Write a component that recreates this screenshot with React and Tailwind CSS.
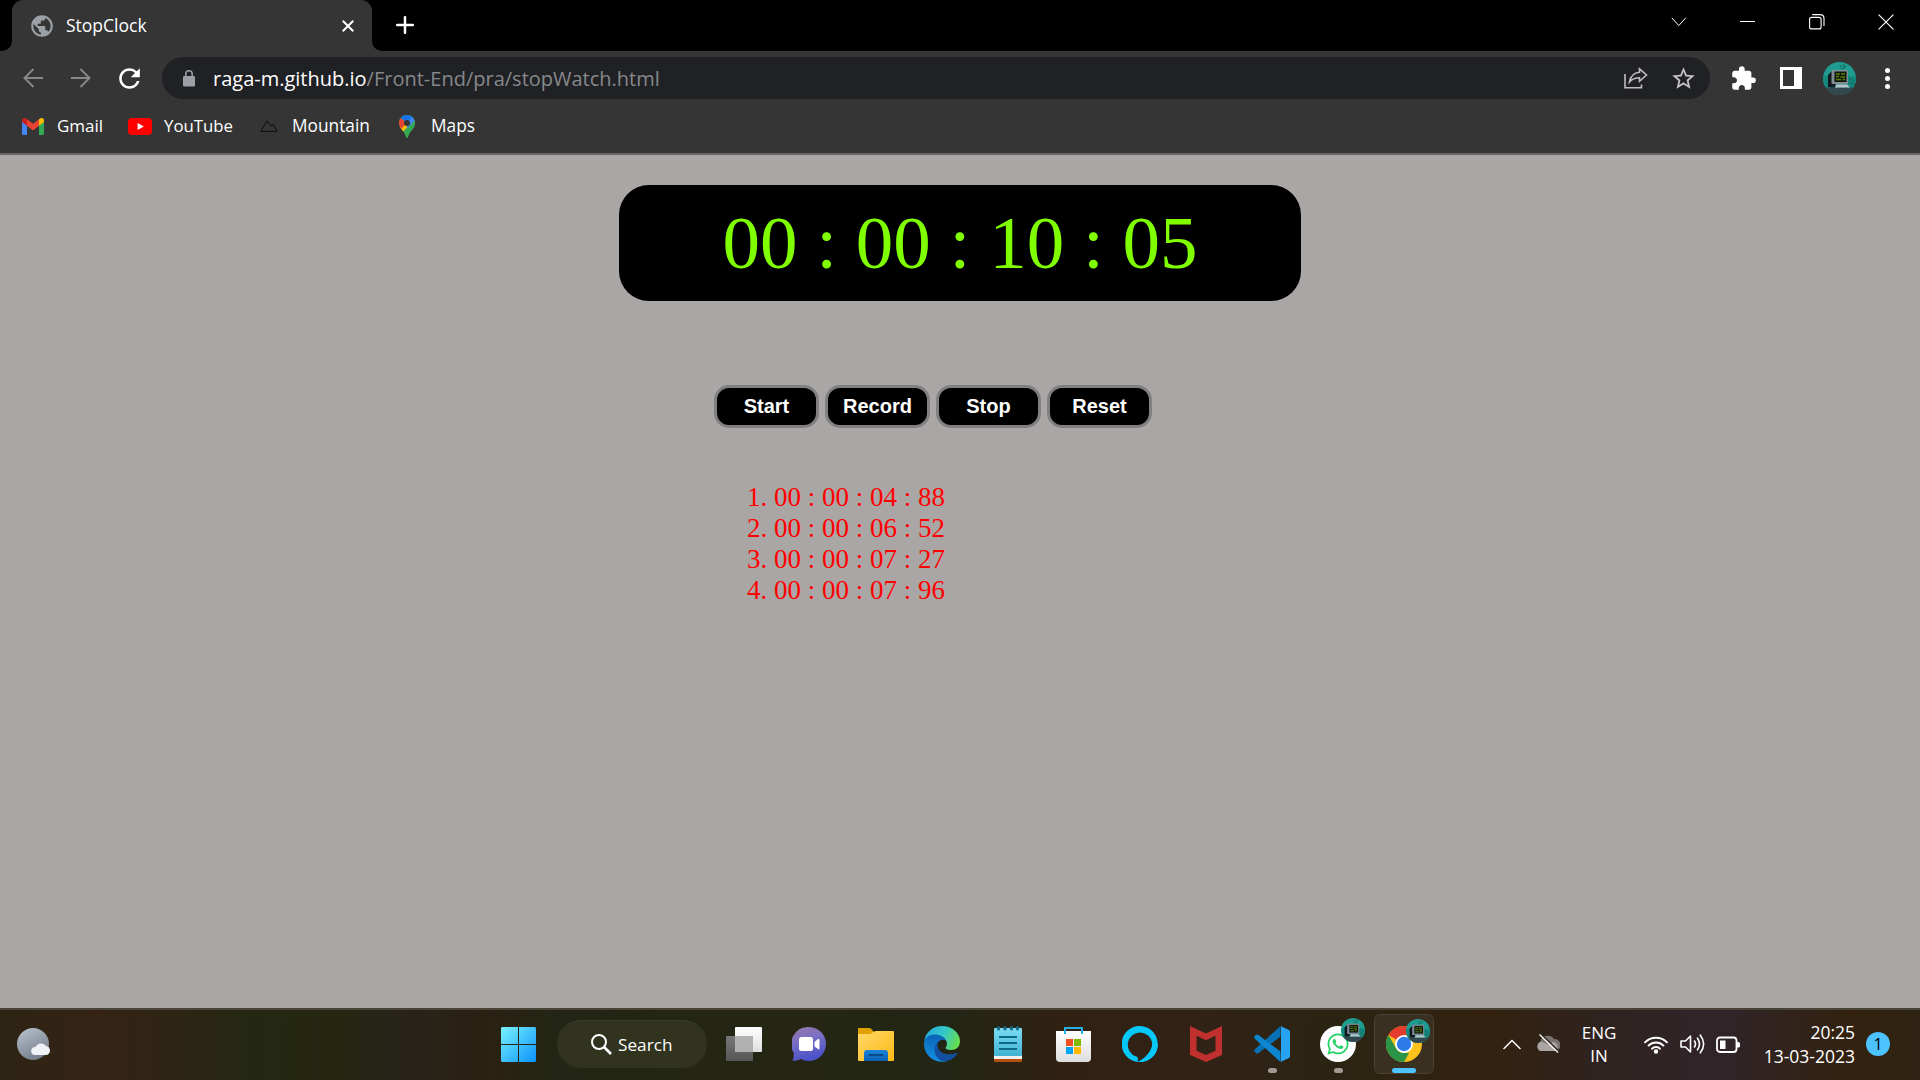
import React from "react";
import { MdExtension, MdPublic, MdRefresh, MdStarBorder } from "react-icons/md";
import { FaWhatsapp } from "react-icons/fa";

function GmailIcon() {
  return (
    <svg width="22" height="17" viewBox="0 0 22 17">
      <path d="M0 2.5V15.5Q0 17 1.5 17H5V7.5L0 3Z" fill="#4285f4" />
      <path d="M22 2.5V15.5Q22 17 20.5 17H17V7.5L22 3Z" fill="#34a853" />
      <path d="M5 1.2V7.8L11 12.4L17 7.8V1.2L11 5.8Z" fill="#ea4335" />
      <path d="M0 2.8Q0 0 2.4 0Q3.4 0 5 1.2V7.8L0 4Z" fill="#c5221f" />
      <path d="M22 2.8Q22 0 19.6 0Q18.6 0 17 1.2V7.8L22 4Z" fill="#fbbc04" />
    </svg>
  );
}

function YouTubeIcon() {
  return (
    <svg width="24" height="17" viewBox="0 0 24 17">
      <rect width="24" height="17" rx="4" fill="#f00" />
      <path d="M9.6 4.9L15.8 8.4L9.6 12Z" fill="#fff" />
    </svg>
  );
}

function MountainIcon() {
  return (
    <svg width="18" height="12" viewBox="0 0 18 12" fill="none" stroke="#0c0c0c" strokeWidth="1">
      <path d="M0.6 11.4L7.2 0.8L10.8 6.4L12.9 4.2L17.4 11.4Z" />
    </svg>
  );
}

function MapsIcon() {
  return (
    <svg width="16" height="23" viewBox="0 0 16 23">
      <defs>
        <clipPath id="pin">
          <path d="M8 0C3.5 0 0 3.5 0 7.9C0 13.5 5.5 15.5 7 21.8Q8 24.2 9 21.8C10.5 15.5 16 13.5 16 7.9C16 3.5 12.500 0 8 0Z" />
        </clipPath>
      </defs>
      <g clipPath="url(#pin)">
        <rect width="16" height="23" fill="#34a853" />
        <path d="M-1 14L8 4L12 8L2 19Z" fill="#fbbc04" />
        <path d="M-1 1L8 8L-1 17Z" fill="#ea4335" />
        <path d="M1.800 2.800L8 8L13.500 1.800L11 -1H3Z" fill="#1a73e8" />
        <path d="M8 8L13.500 1.500L17 8L8 17Z" fill="#4285f4" />
        <path d="M17 4L4 18L8 24L17 18Z" fill="#34a853" />
      </g>
      <circle cx="8" cy="8" r="3" fill="#353535" />
    </svg>
  );
}

function LockIcon() {
  return (
    <svg width="12" height="17" viewBox="0 0 12 17">
      <rect x="0" y="6" width="12" height="10.500" rx="1.300" fill="#9aa0a6" />
      <path d="M2.800 7V4A3.200 3.200 0 0 1 9.200 4V7" fill="none" stroke="#9aa0a6" strokeWidth="1.500" />
    </svg>
  );
}

function Avatar({ size }) {
  return (
    <svg width={size} height={size} viewBox="0 0 33 33">
      <defs>
        <clipPath id="face">
          <circle cx="16.500" cy="16.500" r="16.500" />
        </clipPath>
      </defs>
      <g clipPath="url(#face)">
        <rect width="33" height="33" fill="#1f9c90" />
        <rect y="14" width="33" height="12" fill="#148a7e" />
        <rect y="25.500" width="33" height="8" fill="#33474f" />
        <path d="M17 3L19 7M20 2L22 6M23 3L20 7M26 16L31 19M26 20L32 23" stroke="#12655f" strokeWidth="1" />
        <path d="M5 13L9 9H12V25H5Z" fill="#11181d" />
        <rect x="8.500" y="8" width="16.500" height="14" rx="1" fill="#7f8b97" />
        <rect x="11.500" y="9.500" width="12" height="10.500" fill="#10170b" />
        <path d="M13 12H17M18 12H22M13 14.500H16M17.500 15H22M13 17.500H18M19.500 17.500H22" stroke="#557f10" strokeWidth="1.500" />
        <path d="M13 22.500H24L27 25.500H12Z" fill="#b9c3cc" />
        <path d="M7 22.500H13L11.500 25.500H7Z" fill="#161c22" />
      </g>
    </svg>
  );
}

function TitleBar() {
  return (
    <div className="flex h-[51px] items-end bg-black">
      <div className="h-[10px] w-[12px] bg-[#353535]">
        <div className="h-full w-full rounded-br-[10px] bg-black" />
      </div>
      <div className="flex h-[51px] w-[360px] items-center rounded-t-[11px] bg-[#353535] pl-[17px] pr-[18px]">
        <MdPublic size={26} color="#9aa0a6" />
        <span className="ml-[11px] pb-[2px] text-[17.5px] leading-6">StopClock</span>
        <svg className="ml-auto" width="12" height="12" viewBox="0 0 12 12" stroke="#fff" strokeWidth="2">
          <path d="M0.700 0.700L11.300 11.300M11.300 0.700L0.700 11.300" />
        </svg>
      </div>
      <div className="h-[10px] w-[12px] bg-[#353535]">
        <div className="h-full w-full rounded-bl-[10px] bg-black" />
      </div>
      <svg className="mb-[17px] ml-[12px]" width="18" height="18" viewBox="0 0 18 18" stroke="#fff" strokeWidth="2.500" strokeLinecap="round">
        <path d="M9 1.200V16.800M1.200 9H16.800" />
      </svg>
      <div className="ml-auto flex h-[43px] items-center self-start pr-[26px]">
        <svg width="16" height="10" viewBox="0 0 16 10" fill="none" stroke="#fff" strokeWidth="1">
          <path d="M0.800 0.800L7.800 8.600L14.800 0.800" />
        </svg>
        <div className="ml-[53px] h-px w-[15px] bg-white" />
        <svg className="ml-[54px]" width="16" height="16" viewBox="0 0 16 16" fill="none" stroke="#fff" strokeWidth="1.100">
          <rect x="0.600" y="3.400" width="11.500" height="11.500" rx="2" />
          <path d="M3.200 0.600H11Q15 0.600 15 4.500V12" />
        </svg>
        <svg className="ml-[53px]" width="16" height="16" viewBox="0 0 16 16" stroke="#fff" strokeWidth="1.200">
          <path d="M0.600 0.600L15.400 15.400M15.400 0.600L0.600 15.400" />
        </svg>
      </div>
    </div>
  );
}

function Toolbar() {
  return (
    <div className="flex h-[54px] items-center pr-[26px]">
      <div className="flex w-[162px] items-center pl-[23px]">
        <svg width="20" height="20" viewBox="0 0 20 20" fill="none" stroke="#87898b" strokeWidth="1.900">
          <path d="M20 10H1.500M10.500 1L1.500 10L10.500 19" />
        </svg>
        <svg className="ml-[28px]" width="20" height="20" viewBox="0 0 20 20" fill="none" stroke="#87898b" strokeWidth="1.900">
          <path d="M0 10H18.500M9.500 1L18.500 10L9.500 19" />
        </svg>
        <MdRefresh className="ml-[23px]" size={31} color="#fff" />
      </div>
      <div className="flex h-[42px] w-[1548px] items-center rounded-full bg-[#202124] pl-[21px] pr-[13px]">
        <LockIcon />
        <span className="ml-[18px] pt-px text-[20px] leading-7">raga-m.github.io</span>
        <span className="pt-px text-[20px] leading-7 text-[#86888b]">/Front-End/pra/stopWatch.html</span>
        <svg className="ml-auto" width="24" height="22" viewBox="0 0 24 22" fill="none" stroke="#bfbfbf" strokeWidth="1.600">
          <path d="M1 7V20.800H17.500V17.500" />
          <path d="M15.500 1.800L22.500 8L15.500 14.300V10.700C11 10.700 8 12 5.500 15C6.500 9.500 9.500 5.800 15.500 5.300Z" />
        </svg>
        <MdStarBorder className="ml-[22px]" size={27} color="#c4c4c4" />
      </div>
      <MdExtension className="ml-[20px]" size={27} color="#fff" />
      <div className="ml-[23px] flex h-[22px] w-[22px] border-[3px] border-white">
        <div className="ml-auto h-full w-[5px] bg-white" />
      </div>
      <div className="ml-[21px]">
        <Avatar size={33} />
      </div>
      <div className="ml-auto flex flex-col gap-[3px] pr-[4px]">
        <div className="h-[5px] w-[5px] rounded-full bg-white" />
        <div className="h-[5px] w-[5px] rounded-full bg-white" />
        <div className="h-[5px] w-[5px] rounded-full bg-white" />
      </div>
    </div>
  );
}

function Bookmarks() {
  return (
    <div className="flex h-[50px] items-center border-b-2 border-[#656565] pb-[6px] pl-[22px] text-[17.3px] leading-6">
      <GmailIcon />
      <span className="ml-[13px] w-[71px] text-[17px]">Gmail</span>
      <YouTubeIcon />
      <span className="ml-[12px] w-[96px] text-[16.800px]">YouTube</span>
      <MountainIcon />
      <span className="ml-[14px] w-[107px]">Mountain</span>
      <MapsIcon />
      <span className="ml-[16px]">Maps</span>
    </div>
  );
}

const BUTTONS = ["Start", "Record", "Stop", "Reset"];
const RECORDS = ["00 : 00 : 04 : 88", "00 : 00 : 06 : 52", "00 : 00 : 07 : 27", "00 : 00 : 07 : 96"];

function StopClock() {
  return (
    <main className="flex-1 bg-[#aaa6a5] pt-[30px] font-['Liberation_Serif',serif]">
      <div className="mx-auto flex h-[116px] w-[682px] items-center justify-center rounded-[30px] bg-black text-[75px] leading-[86px] text-[#7fff00]">
        00 : 00 : 10 : 05
      </div>
      <div className="ml-[714px] mt-[84px] flex gap-[6px]">
        {BUTTONS.map((label) => (
          <button
            key={label}
            className="h-[43px] w-[105px] rounded-[15px] border-[3px] border-[#808080] bg-black pb-px text-center font-['Liberation_Sans',sans-serif] text-[20px] font-bold leading-[23px] text-white"
          >
            {label}
          </button>
        ))}
      </div>
      <ol className="ml-[747px] mt-[54px] text-[27px] leading-[31px] text-[#ff0000]">
        {RECORDS.map((time, i) => (
          <li key={time}>
            {i + 1}. {time}
          </li>
        ))}
      </ol>
    </main>
  );
}

function StartIcon() {
  return (
    <svg className="ml-px mt-px" width="35" height="35" viewBox="0 0 35 35">
      <defs>
        <linearGradient id="win" x1="0" y1="0" x2="35" y2="35" gradientUnits="userSpaceOnUse">
          <stop offset="0" stopColor="#79f2ff" />
          <stop offset="1" stopColor="#0a93fb" />
        </linearGradient>
      </defs>
      <path d="M1 0H17V17H0V1ZM18 0H34L35 1V17H18ZM0 18H17V35H1L0 34ZM18 18H35V34L34 35H18Z" fill="url(#win)" />
    </svg>
  );
}

function TaskViewIcon() {
  return (
    <svg width="36" height="34" viewBox="0 0 36 34">
      <defs>
        <linearGradient id="tvw" x1="0" y1="0" x2="0" y2="1">
          <stop offset="0" stopColor="#ffffff" />
          <stop offset="1" stopColor="#dedede" />
        </linearGradient>
        <linearGradient id="tvd" x1="0" y1="0" x2="0" y2="1">
          <stop offset="0" stopColor="#777" />
          <stop offset="1" stopColor="#555" />
        </linearGradient>
      </defs>
      <rect x="0" y="9" width="27" height="25" rx="1" fill="url(#tvd)" />
      <rect x="9" y="0" width="27" height="25" rx="1" fill="url(#tvw)" />
      <path d="M9 9H27V25H9Z" fill="#b1b1b1" />
    </svg>
  );
}

function ChatIcon() {
  return (
    <svg className="mr-[2px]" width="34" height="34" viewBox="0 0 34 34">
      <defs>
        <linearGradient id="chat" x1="0" y1="0" x2="0.300" y2="1">
          <stop offset="0" stopColor="#9a77a8" />
          <stop offset="0.450" stopColor="#7a70c4" />
          <stop offset="1" stopColor="#4b52c8" />
        </linearGradient>
      </defs>
      <path d="M17 0A17 17 0 1 1 9 32Q5 34 0.500 34Q1.800 31 1.800 26A17 17 0 0 1 17 0Z" fill="url(#chat)" />
      <rect x="7" y="10" width="14" height="14" rx="2.500" fill="#fff" />
      <path d="M22.500 15L26 12Q27.500 11.500 27.500 13V21.500Q27.500 23 26 22L22.500 19.500Z" fill="#fff" />
    </svg>
  );
}

function FolderIcon() {
  return (
    <svg width="36" height="33" viewBox="0 0 36 33">
      <defs>
        <linearGradient id="fold" x1="0" y1="0" x2="1" y2="1">
          <stop offset="0" stopColor="#ffd968" />
          <stop offset="1" stopColor="#fdb916" />
        </linearGradient>
        <linearGradient id="tray" x1="0" y1="0" x2="0" y2="1">
          <stop offset="0" stopColor="#1b86dc" />
          <stop offset="1" stopColor="#0a5fb2" />
        </linearGradient>
      </defs>
      <path d="M0 1Q0 0 1 0H11Q12.500 0 13.500 1.200L16 4V10H0Z" fill="#e0a000" />
      <path d="M0 6H11Q13 6 14.500 4.500Q16 3 18 3H35Q36 3 36 4V32Q36 33 35 33H1Q0 33 0 32Z" fill="url(#fold)" />
      <path d="M6 33V25Q6 22 9 22H27Q30 22 30 25V33Z" fill="url(#tray)" />
      <rect x="10.500" y="26" width="15" height="2" rx="1" fill="#0a4a86" />
    </svg>
  );
}

function EdgeIcon() {
  return (
    <svg width="36" height="36" viewBox="0 0 36 36">
      <defs>
        <linearGradient id="eg1" x1="0" y1="0.200" x2="1" y2="0.500">
          <stop offset="0" stopColor="#25a8de" />
          <stop offset="0.550" stopColor="#35c9c6" />
          <stop offset="1" stopColor="#66de50" />
        </linearGradient>
        <linearGradient id="eg2" x1="0.600" y1="0" x2="0.400" y2="1">
          <stop offset="0" stopColor="#0a63b4" />
          <stop offset="1" stopColor="#1490e4" />
        </linearGradient>
      </defs>
      <path d="M0.300 15C1.500 6 9 0 18 0C28.500 0 36 7.500 36 15C36 21 32 24 27.500 24C23.500 24 20.800 23 21.800 21.300C23.500 19 23.500 16 21 13C16 8 7 8 0.300 15Z" fill="url(#eg1)" />
      <path d="M0 18C0 11.500 5 8.500 10.500 8.500C16 8.500 20.500 11 22 14.500C18 12.500 13 15 12.500 20C12 28 18 34.500 24 35C12 38.500 0 30.500 0 18Z" fill="url(#eg2)" />
      <path d="M15.500 14.200C9 18.500 8.500 30 17 34.500C24 37 30.500 32.500 33.200 27.500C33.500 26.700 32.800 26.500 32 27C24 30.500 13 27 13.700 18.500C14 16.500 14.600 15.200 15.500 14.200Z" fill="#124f9e" />
    </svg>
  );
}

function NotepadIcon() {
  return (
    <svg width="28" height="36" viewBox="0 0 28 36">
      <defs>
        <linearGradient id="note" x1="0" y1="0" x2="0" y2="1">
          <stop offset="0" stopColor="#7bdcf3" />
          <stop offset="1" stopColor="#41b4d4" />
        </linearGradient>
      </defs>
      <rect y="28" width="28" height="8" rx="1.500" fill="#b5500f" />
      <rect y="26" width="28" height="7" fill="#f0f0f0" />
      <rect y="2" width="28" height="28" rx="1" fill="url(#note)" />
      <path d="M5 11H23M5 17H23M5 23H23" stroke="#0a6a88" strokeWidth="2" />
      <path d="M4.500 1.500V3M11 1.500V3M17.500 1.500V3M23.500 1.500V3" stroke="#146a85" strokeWidth="3" strokeLinecap="round" />
    </svg>
  );
}

function StoreIcon() {
  return (
    <svg className="mr-px mt-px" width="35" height="35" viewBox="0 0 35 35">
      <defs>
        <linearGradient id="bag" x1="0" y1="0" x2="0" y2="1">
          <stop offset="0" stopColor="#ffffff" />
          <stop offset="1" stopColor="#dedede" />
        </linearGradient>
      </defs>
      <path d="M0 4H35V31Q35 35 31 35H4Q0 35 0 31Z" fill="url(#bag)" />
      <path d="M9 7V1H26V7" fill="none" stroke="#28aee6" strokeWidth="2" />
      <rect x="10" y="12" width="7" height="7" fill="#f25022" />
      <rect x="18" y="12" width="7" height="7" fill="#7fba00" />
      <rect x="10" y="20" width="7" height="7" fill="#00a4ef" />
      <rect x="18" y="20" width="7" height="7" fill="#ffb900" />
    </svg>
  );
}

function AlexaIcon() {
  return (
    <svg width="36" height="36" viewBox="0 0 36 36">
      <path fillRule="evenodd" d="M18 0A18 18 0 1 1 15.800 35.900V32.500C15.800 31.500 15.300 30.800 14.300 30.500A12.300 12.300 0 1 1 30.300 17.500C30.300 25.500 22 33 15.800 35.900A18 18 0 0 1 18 0Z" fill="#05c8fa" />
      <path d="M15.800 35.900C23 33.500 30.300 26 30.300 17.800L36 18A18 18 0 0 1 15.800 35.900Z" fill="#05c8fa" />
    </svg>
  );
}

function McAfeeIcon() {
  return (
    <svg width="32" height="36" viewBox="0 0 32 36">
      <path fillRule="evenodd" d="M0 0L16 7.500L32 0V29L16 36L0 29ZM6.500 9.800V24.800L16 29L25.500 24.800V9.800L16 14.300Z" fill="#c0302e" />
    </svg>
  );
}

function VSCodeIcon() {
  return (
    <svg width="36" height="36" viewBox="0 0 36 36">
      <path d="M26.500 0V10.500L4.500 27Q3 28 1.800 27L0.500 25.500Q-0.400 24.300 0.800 23.200Z" fill="#0870b4" />
      <path d="M26.500 36V25.500L4.500 9Q3 8 1.800 9L0.500 10.500Q-0.400 11.700 0.800 12.800Z" fill="#0c86d0" />
      <path d="M26.500 0L35 4Q36 4.600 36 5.700V30.300Q36 31.400 35 32L26.500 36Q27 35.500 27 34V2Q27 0.500 26.500 0Z" fill="#27a3f2" />
    </svg>
  );
}

function WhatsAppIcon() {
  return (
    <div className="flex h-9 w-9 items-center justify-center rounded-full bg-white">
      <FaWhatsapp size={24} color="#25d366" />
    </div>
  );
}

function ChromeIcon() {
  return (
    <svg width="36" height="36" viewBox="0 0 36 36">
      <circle cx="18" cy="18" r="18" fill="#fcc21b" />
      <path d="M18 18L2.400 9A18 18 0 0 1 33.600 9H18Z" fill="#e33b2e" />
      <path d="M2.400 9L10.200 22.500Q13 27 18 27L23 27L18 36A18 18 0 0 1 2.400 9Z" fill="#2a9447" />
      <circle cx="18" cy="18" r="9" fill="#fff" />
      <circle cx="18" cy="18" r="7.200" fill="#2f7bea" />
    </svg>
  );
}

const APPS = [
  { name: "taskview", icon: <TaskViewIcon /> },
  { name: "chat", icon: <ChatIcon /> },
  { name: "files", icon: <FolderIcon /> },
  { name: "edge", icon: <EdgeIcon /> },
  { name: "notepad", icon: <NotepadIcon /> },
  { name: "store", icon: <StoreIcon /> },
  { name: "alexa", icon: <AlexaIcon /> },
  { name: "mcafee", icon: <McAfeeIcon /> },
  { name: "vscode", icon: <VSCodeIcon />, open: true },
  { name: "whatsapp", icon: <WhatsAppIcon />, open: true, badge: true },
  { name: "chrome", icon: <ChromeIcon />, active: true, badge: true },
];

function TaskbarApp({ icon, open, active, badge }) {
  return (
    <div className="flex w-[66px] justify-center">
      <div
        className={
          active
            ? "relative flex h-[60px] w-[60px] items-center justify-center rounded-[6px] border border-[#4b4132] bg-[#3a3022]"
            : "relative flex h-[60px] w-[60px] items-center justify-center"
        }
      >
        {icon}
        {badge && (
          <div className="absolute right-[3px] top-[4px]">
            <Avatar size={24} />
          </div>
        )}
        {open && <div className="absolute bottom-[1px] left-[26px] h-[5px] w-[9px] rounded-full bg-[#a09a92]" />}
        {active && <div className="absolute bottom-0 left-[17px] h-[5px] w-[24px] rounded-full bg-[#4cc2ff]" />}
      </div>
    </div>
  );
}

function Weather() {
  return (
    <svg width="34" height="32" viewBox="0 0 34 32">
      <defs>
        <linearGradient id="moon" x1="0.200" y1="0" x2="0.700" y2="1">
          <stop offset="0" stopColor="#b4bfc9" />
          <stop offset="1" stopColor="#727a88" />
        </linearGradient>
      </defs>
      <circle cx="16" cy="16" r="16" fill="url(#moon)" />
      <path d="M18 27A4 4 0 0 1 18.500 19A6.200 6.200 0 0 1 29 18A4.700 4.700 0 0 1 30 27Z" fill="#eef1f5" />
    </svg>
  );
}

function Tray() {
  return (
    <div className="ml-auto flex items-center pr-[30px] text-[17px] leading-6">
      <svg width="18" height="11" viewBox="0 0 18 11" fill="none" stroke="#fff" strokeWidth="1.500">
        <path d="M0.500 10L9 1.500L17.500 10" />
      </svg>
      <svg className="ml-[15px]" width="24" height="20" viewBox="0 0 24 20">
        <path d="M5 17A5 5 0 0 1 4.500 7.500A7.500 7.500 0 0 1 18 5A6 6 0 0 1 19 17Z" fill="#77716f" />
        <path d="M4.500 17A5 5 0 0 1 6 7.500L12 10.500L17 8A5 5 0 0 1 19.500 17Z" fill="#aaa5a3" />
        <path d="M5 0.500L23.500 18" stroke="#302521" strokeWidth="1.800" />
        <path d="M3.500 0.500L22 18.500" stroke="#fff" strokeWidth="1.300" />
      </svg>
      <div className="ml-[21px] w-[36px] text-center leading-[23px]">
        <p>ENG</p>
        <p>IN</p>
      </div>
      <svg className="ml-[26px]" width="26" height="20" viewBox="0 0 26 20" fill="none" stroke="#fff" strokeWidth="1.900" strokeLinecap="round">
        <path d="M2 8.300A15.500 15.500 0 0 1 24 8.300M5.500 11.600A10.500 10.500 0 0 1 20.500 11.600M9 14.700A5.700 5.700 0 0 1 17 14.700" />
        <circle cx="13" cy="17.500" r="1.300" fill="#fff" />
      </svg>
      <svg className="ml-[11px]" width="25" height="20" viewBox="0 0 25 20" fill="none" stroke="#fff" strokeWidth="1.600" strokeLinecap="round" strokeLinejoin="round">
        <path d="M1 7H5.500L10.500 2V18L5.500 13H1Z" />
        <path d="M14.500 7Q16.500 10 14.500 13M17.500 4.200Q21.500 10 17.500 15.800M20.300 1.200Q27 10 20.300 18.800" />
      </svg>
      <svg className="ml-[11px]" width="25" height="17" viewBox="0 0 25 17" fill="none" stroke="#fff" strokeWidth="1.800">
        <rect x="1" y="1.500" width="19.500" height="14.500" rx="3" />
        <rect x="4" y="4.500" width="5.500" height="8.500" fill="#fff" stroke="none" />
        <path d="M21 6H22.500Q24 6 24 7.500V10Q24 11.500 22.500 11.500H21Z" fill="#fff" stroke="none" />
      </svg>
      <div className="ml-[19px] w-[95px] whitespace-nowrap text-right text-[17.5px]">
        <p>20:25</p>
        <p>13-03-2023</p>
      </div>
      <div className="ml-[11px] flex h-[24px] w-[24px] items-center justify-center rounded-full bg-[#4cc2ff] text-[16px] leading-6 text-black">1</div>
    </div>
  );
}

function Taskbar() {
  return (
    <footer className="grid h-[72px] grid-cols-[485px_952px_1fr] items-center border-t-2 border-[#494338] pb-[2px] bg-[linear-gradient(90deg,#2d2413_0px,#352315_100px,#2e2514_170px,#242812_250px,#262611_340px,#27231b_400px,#2b2113_480px,#232614_560px,#252513_750px,#232614_950px,#302113_1060px,#322216_1180px,#2b2413_1320px,#33220f_1490px,#2f2320_1600px,#30242a_1720px,#33220f_1850px,#2e2313_1920px)]">
      <div className="pl-[17px]">
        <Weather />
      </div>
      <div className="flex items-center">
        <div className="flex w-[66px] justify-center">
          <StartIcon />
        </div>
        <div className="ml-[6px] mr-[4px] flex h-[48px] w-[150px] items-center rounded-full border-t border-[#3a3c2b] bg-[#31331f] pl-[34px]">
          <svg width="21" height="21" viewBox="0 0 21 21" fill="none" stroke="#fff" strokeWidth="2">
            <circle cx="8" cy="8" r="7" />
            <path d="M13 13L20 20" strokeWidth="2.600" />
          </svg>
          <span className="ml-[6px] text-[17.2px] leading-6">Search</span>
        </div>
        {APPS.map(({ name, ...app }) => (
          <TaskbarApp key={name} {...app} />
        ))}
      </div>
      <Tray />
    </footer>
  );
}

export default function App() {
  return (
    <div className="flex h-[1080px] w-[1920px] flex-col overflow-hidden bg-[#353535] font-['Open_Sans',sans-serif] text-white">
      <TitleBar />
      <Toolbar />
      <Bookmarks />
      <StopClock />
      <Taskbar />
    </div>
  );
}
